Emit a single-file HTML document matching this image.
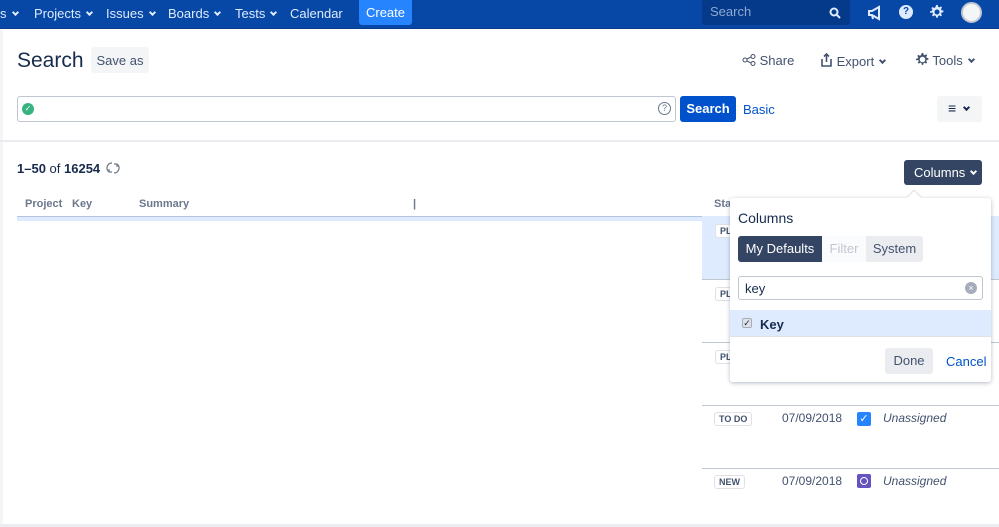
<!DOCTYPE html>
<html><head><meta charset="utf-8"><style>
*{box-sizing:border-box;margin:0;padding:0}
body{width:999px;height:527px;overflow:hidden;background:#fff;font-family:"Liberation Sans",sans-serif;color:#172b4d;position:relative;font-size:13px}
.a{position:absolute}
.nav{left:0;top:0;width:999px;height:29px;background:#0747a6;border-bottom:1px solid #0a3d8f}
.nav span{position:absolute;top:6px;color:#deebff;font-size:13px}
.chev{display:inline-block;width:5px;height:5px;border-right:2px solid currentColor;border-bottom:2px solid currentColor;transform:rotate(45deg);margin-left:6px;position:relative;top:-3px}
.btn{background:#f4f5f7;border-radius:3px;color:#42526e}
.lbl{border:1px solid #dfe1e6;border-radius:3px;font-size:9px;font-weight:bold;color:#42526e;padding:1px 4px;background:#fff}
.sep{height:1px;background:#c1c7d0;left:702px;width:297px}
</style></head><body>
<svg width="0" height="0" style="position:absolute"><defs><g id="cog"><path d="M6.2 0h1.6l.3 1.8 1.3.6 1.5-1 1.1 1.1-1 1.5.6 1.3 1.8.3v1.6l-1.8.3-.6 1.3 1 1.5-1.1 1.1-1.5-1-1.3.6-.3 1.8H6.2l-.3-1.8-1.3-.6-1.5 1-1.1-1.1 1-1.5-.6-1.3L0 7.8V6.2l1.8-.3.6-1.3-1-1.5 1.1-1.1 1.5 1 1.3-.6z"/></g></defs></svg>
<div class="a nav">
<span style="left:0">s<i class="chev"></i></span>
<span style="left:34px">Projects<i class="chev"></i></span>
<span style="left:106px">Issues<i class="chev"></i></span>
<span style="left:168px">Boards<i class="chev"></i></span>
<span style="left:235px">Tests<i class="chev"></i></span>
<span style="left:290px">Calendar</span>
<div class="a" style="left:359px;top:0;width:53px;height:25px;background:#2684ff;border-radius:0 0 3px 3px;color:#fff;text-align:center;line-height:25px">Create</div>
<div class="a" style="left:702px;top:0;width:148px;height:25px;background:#053a8a;border-radius:0 0 3px 3px;color:#8fa8d0;padding-left:8px;line-height:24px">Search
<svg class="a" style="left:127px;top:7px" width="12" height="12"><circle cx="5" cy="5" r="3.5" stroke="#deebff" stroke-width="2" fill="none"/><path d="M8 8l3 3" stroke="#deebff" stroke-width="2"/></svg></div>
<svg class="a" style="left:867px;top:5px" width="16" height="16"><path d="M2 6h3l7-4v12l-7-4H2z M5 10l1 4" fill="none" stroke="#deebff" stroke-width="2"/></svg>
<div class="a" style="left:899px;top:5px;width:14px;height:14px;border-radius:50%;background:#deebff;color:#0747a6;font-size:10px;font-weight:bold;text-align:center;line-height:14px">?</div>
<svg class="a" style="left:930px;top:5px" width="14" height="14"><use href="#cog" fill="#deebff"/><circle cx="7" cy="7" r="2.5" fill="#0747a6"/></svg>
<div class="a" style="left:961px;top:2px;width:21px;height:21px;border-radius:50%;background:#f4f5f7;border:2px solid #c1c7d0"></div>
</div>
<div class="a" style="left:0;top:30px;width:3px;height:497px;background:#f4f5f7"></div>
<div class="a" style="left:17px;top:49px;font-size:21px;color:#172b4d">Search</div>
<div class="a btn" style="left:91px;top:47px;width:58px;height:26px;text-align:center;line-height:27px">Save as</div>
<div class="a" style="left:742px;top:53px;color:#42526e">
<svg width="14" height="12" style="vertical-align:-1px"><circle cx="3" cy="6" r="2" fill="none" stroke="#42526e"/><circle cx="11" cy="2.5" r="2" fill="none" stroke="#42526e"/><circle cx="11" cy="9.5" r="2" fill="none" stroke="#42526e"/><path d="M5 5l4-2M5 7l4 2" stroke="#42526e"/></svg> Share</div>
<div class="a" style="left:820px;top:53px;color:#42526e">
<svg width="13" height="14" style="vertical-align:-1px"><path d="M2 6v7h9V6M6.5 9V1M4 3.5l2.5-2.5 2.5 2.5" fill="none" stroke="#42526e" stroke-width="1.6"/></svg> Export<i class="chev"></i></div>
<div class="a" style="left:916px;top:53px;color:#42526e">
<svg width="13" height="13" viewBox="0 0 14 14" style="vertical-align:-1px"><use href="#cog" fill="#42526e"/><circle cx="7" cy="7" r="3" fill="#fff"/></svg> Tools<i class="chev"></i></div>
<div class="a" style="left:17px;top:96px;width:659px;height:26px;border:1px solid #c1c7d0;border-radius:3px"></div>
<div class="a" style="left:22px;top:103px;width:12px;height:12px;border-radius:50%;background:#36b37e;color:#fff;font-size:8px;text-align:center;line-height:12px">✓</div>
<div class="a" style="left:658px;top:102px;width:13px;height:13px;border-radius:50%;border:1px solid #6b778c;font-size:9px;text-align:center;line-height:11px;color:#6b778c">?</div>
<div class="a" style="left:680px;top:96px;width:56px;height:26px;background:#0052cc;border-radius:3px;color:#fff;font-weight:bold;text-align:center;line-height:26px">Search</div>
<div class="a" style="left:743px;top:102px;color:#0052cc">Basic</div>
<div class="a btn" style="left:937px;top:96px;width:45px;height:26px;color:#172b4d;padding:4px 0 0 11px;font-size:14px">≡<i class="chev" style="left:2px"></i></div>
<div class="a" style="left:0;top:140px;width:999px;height:2px;background:#ebecf0"></div>
<div class="a" style="left:17px;top:161px;font-size:13px"><b>1–50</b> of <b>16254</b>
<svg width="14" height="14" style="vertical-align:-2px;margin-left:2px"><path d="M6 2A5 5 0 0 0 3 11M8 12A5 5 0 0 0 11 3M3 11l0-3M3 11l3 0M11 3l0 3M11 3l-3 0" fill="none" stroke="#6b778c" stroke-width="1.2"/></svg></div>
<div class="a" style="left:904px;top:160px;width:78px;height:25px;background:#344563;border-radius:3px;color:#fff;line-height:25px;padding-left:10px">Columns<i class="chev"></i></div>
<div class="a" style="left:17px;top:198px;font-size:11px;font-weight:bold;color:#6b778c;width:700px">
<span class="a" style="left:8px">Project</span><span class="a" style="left:55px">Key</span><span class="a" style="left:122px">Summary</span><span class="a" style="left:396px">|</span><span class="a" style="left:697px">Sta</span></div>
<div class="a" style="left:17px;top:216px;width:982px;height:5px;background:#deebff;border-top:1px solid #b3c4de"></div>
<div class="a" style="left:702px;top:216px;width:297px;height:63px;background:#deebff"></div>
<div class="a sep" style="top:279px"></div><div class="a sep" style="top:342px"></div><div class="a sep" style="top:405px"></div><div class="a sep" style="top:468px"></div>
<div class="a" style="left:0;top:524px;width:999px;height:3px;background:#ebecf0"></div>
<span class="a lbl" style="left:715px;top:224px">PL</span><span class="a lbl" style="left:715px;top:287px">PL</span><span class="a lbl" style="left:715px;top:350px">PL</span>
<span class="a lbl" style="left:714px;top:412px">TO DO</span>
<div class="a" style="left:782px;top:411px;color:#42526e;font-size:12px">07/09/2018</div>
<div class="a" style="left:857px;top:412px;width:14px;height:14px;background:#2684ff;border-radius:2px;color:#fff;font-size:11px;text-align:center;line-height:14px">✓</div>
<div class="a" style="left:883px;top:411px;font-style:italic;color:#42526e;font-size:12px">Unassigned</div>
<span class="a lbl" style="left:714px;top:475px">NEW</span>
<div class="a" style="left:782px;top:474px;color:#42526e;font-size:12px">07/09/2018</div>
<div class="a" style="left:857px;top:474px;width:14px;height:14px;background:#6554c0;border-radius:2px"><div style="margin:3px;width:8px;height:8px;border:1.5px solid #fff;border-radius:50%"></div></div>
<div class="a" style="left:883px;top:474px;font-style:italic;color:#42526e;font-size:12px">Unassigned</div>
<div class="a" style="left:730px;top:198px;width:261px;height:184px;background:#fff;border-radius:3px;box-shadow:0 1px 4px rgba(9,30,66,.3)">
<div class="a" style="left:8px;top:12px;font-size:14px;color:#172b4d">Columns</div>
<div class="a" style="left:8px;top:38px;width:84px;height:26px;background:#344563;color:#fff;border-radius:3px 0 0 3px;text-align:center;line-height:26px">My Defaults</div>
<div class="a" style="left:92px;top:38px;width:44px;height:26px;background:#fafbfc;color:#c1c7d0;text-align:center;line-height:26px">Filter</div>
<div class="a" style="left:136px;top:38px;width:57px;height:26px;background:#ebecf0;color:#42526e;border-radius:0 3px 3px 0;text-align:center;line-height:26px">System</div>
<div class="a" style="left:8px;top:78px;width:245px;height:24px;border:1px solid #c1c7d0;border-radius:3px;padding:4px 6px">key</div>
<div class="a" style="left:235px;top:84px;width:12px;height:12px;border-radius:50%;background:#a5adba;color:#fff;font-size:9px;text-align:center;line-height:12px">×</div>
<div class="a" style="left:0;top:112px;width:261px;height:27px;background:#deebff;border-bottom:1px solid #dfe1e6"></div>
<div class="a" style="left:12px;top:120px;width:10px;height:10px;background:#dfe1e6;border:1px solid #a5adba;border-radius:2px;font-size:9px;line-height:8px;text-align:center;color:#172b4d">✓</div>
<div class="a" style="left:30px;top:119px;font-weight:bold">Key</div>
<div class="a" style="left:155px;top:150px;width:48px;height:26px;background:#ebecf0;border-radius:3px;text-align:center;line-height:26px;color:#42526e">Done</div>
<div class="a" style="left:216px;top:156px;color:#0052cc">Cancel</div>
</div>
<div class="a" style="left:909px;top:193px;width:10px;height:10px;background:#fff;transform:rotate(45deg);box-shadow:-1px -1px 1px rgba(9,30,66,.15)"></div>
</body></html>
